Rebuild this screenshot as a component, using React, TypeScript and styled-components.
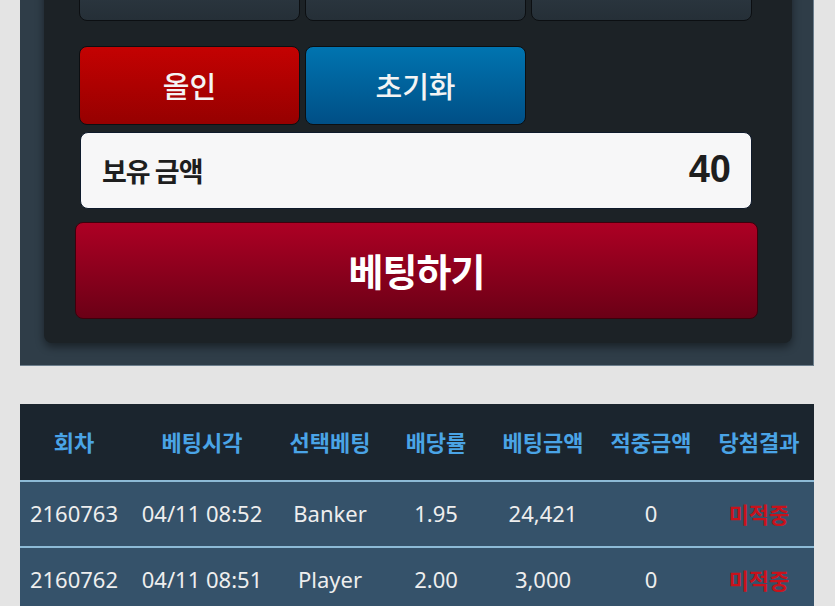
import React from 'react'
import styled, { createGlobalStyle } from 'styled-components'

const GlobalStyle = createGlobalStyle`
  html, body {
    margin: 0;
    padding: 0;
    background: #e4e4e4;
    overflow: hidden;
  }
  body {
    font-family: 'Noto Sans', 'Noto Sans CJK KR', sans-serif;
  }
`

const Page = styled.div`
  padding: 0 21px 0 20px;
`

const Panel = styled.section`
  margin-top: -100px;
  background: #2f3d48;
  border: 1px solid #6c7e8c;
  border-top: none;
  border-left: none;
  padding: 24px 21px 22px 24px;
`

const Board = styled.div`
  background: #1c2226;
  border-radius: 0 0 8px 8px;
  box-shadow: 0 4px 8px rgba(0, 0, 0, 0.45);
  padding: 18px 0 24px 35px;
`

const Controls = styled.div`
  width: 673px;
  display: flex;
  flex-direction: column;
`

const ButtonRow = styled.div<{ $gap: number }>`
  display: grid;
  grid-template-columns: repeat(3, 221px);
  column-gap: 5px;
  margin-bottom: ${(p) => p.$gap}px;
`

const tones = {
  slate: ['#36444f', '#252f37'],
  red: ['#c40202', '#960000'],
  blue: ['#0074b0', '#004f86'],
}

const KeyButton = styled.button<{ $tone: keyof typeof tones }>`
  height: 79px;
  border: 1px solid #0c0f12;
  border-radius: 8px;
  background: linear-gradient(
    to bottom,
    ${(p) => tones[p.$tone][0]},
    ${(p) => tones[p.$tone][1]}
  );
  color: #f4f4f4;
  font-family: 'Noto Sans CJK KR', sans-serif;
  font-size: 29px;
  font-weight: 500;
  padding: 0;
  padding-bottom: 2px;
  cursor: pointer;
`

const Balance = styled.div`
  height: 77px;
  margin-left: 1px;
  box-sizing: border-box;
  background: #f7f7f8;
  border: 1px solid #0e1a2b;
  border-radius: 8px;
  display: flex;
  align-items: center;
  justify-content: space-between;
  padding: 0 20px 0 21px;
  color: #1e1e1e;
`

const BalanceLabel = styled.span`
  font-family: 'Noto Sans CJK KR', sans-serif;
  font-size: 27px;
  font-weight: 700;
  letter-spacing: -1px;
`

const BalanceValue = styled.span`
  font-family: 'Liberation Sans', 'Noto Sans', sans-serif;
  font-size: 38px;
  font-weight: 700;
  padding-bottom: 2px;
`

const BetButton = styled.button`
  margin: 13px -6px 0 -4px;
  height: 97px;
  border: 1px solid #3e000c;
  border-radius: 8px;
  background: linear-gradient(to bottom, #ad0024, #6b0016);
  color: #ffffff;
  font-family: 'Noto Sans CJK KR', sans-serif;
  font-size: 38px;
  font-weight: 700;
  letter-spacing: -1px;
  padding: 0 0 2px;
  cursor: pointer;
`

const Table = styled.table`
  margin-top: 38px;
  width: 100%;
  border-collapse: collapse;
  table-layout: fixed;
`

const HeadCell = styled.th<{ $w: number }>`
  width: ${(p) => p.$w}px;
  height: 74px;
  background: #1b252e;
  color: #4aa4e6;
  font-family: 'Noto Sans CJK KR', sans-serif;
  font-size: 22px;
  font-weight: 700;
  text-align: center;
  padding: 0 0 2px;
  border-bottom: 2px solid #8dbad6;
`

const Row = styled.tr`
  background: #35526a;
  & + & td {
    border-top: 2px solid #8dbad6;
  }
`

const Cell = styled.td<{ $miss?: boolean }>`
  height: 62px;
  padding: 0 0 2px;
  text-align: center;
  color: ${(p) => (p.$miss ? '#c8121c' : '#eeeeee')};
  font-family: ${(p) =>
    p.$miss ? "'Noto Sans CJK KR', sans-serif" : "'Noto Sans', 'Noto Sans CJK KR', sans-serif"};
  font-size: 22px;
  font-weight: ${(p) => (p.$miss ? 700 : 400)};
  white-space: nowrap;
`

const columns: [string, number][] = [
  ['회차', 108],
  ['베팅시각', 148],
  ['선택베팅', 108],
  ['배당률', 104],
  ['베팅금액', 110],
  ['적중금액', 106],
  ['당첨결과', 110],
]

const history = [
  ['2160763', '04/11 08:52', 'Banker', '1.95', '24,421', '0', '미적중'],
  ['2160762', '04/11 08:51', 'Player', '2.00', '3,000', '0', '미적중'],
]

export default function App() {
  return (
    <Page>
      <GlobalStyle />
      <Panel>
        <Board>
          <Controls>
            <ButtonRow $gap={25}>
              <KeyButton $tone='slate' />
              <KeyButton $tone='slate' />
              <KeyButton $tone='slate' />
            </ButtonRow>
            <ButtonRow $gap={7}>
              <KeyButton $tone='red'>올인</KeyButton>
              <KeyButton $tone='blue'>초기화</KeyButton>
            </ButtonRow>
            <Balance>
              <BalanceLabel>보유 금액</BalanceLabel>
              <BalanceValue>40</BalanceValue>
            </Balance>
            <BetButton>베팅하기</BetButton>
          </Controls>
        </Board>
      </Panel>
      <Table>
        <thead>
          <tr>
            {columns.map(([name, w]) => (
              <HeadCell key={name} $w={w}>
                {name}
              </HeadCell>
            ))}
          </tr>
        </thead>
        <tbody>
          {history.map((r) => (
            <Row key={r[0]}>
              {r.map((v, i) => (
                <Cell key={i} $miss={i === 6}>
                  {v}
                </Cell>
              ))}
            </Row>
          ))}
        </tbody>
      </Table>
    </Page>
  )
}
